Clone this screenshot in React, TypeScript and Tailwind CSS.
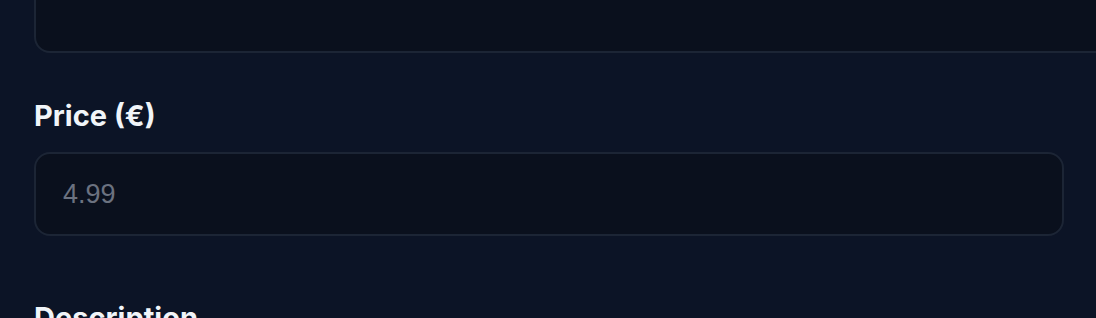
export default function App() {
  return (
    <div className="h-[318px] w-full overflow-hidden bg-[#0c1426] px-[34px] font-['Inter',sans-serif]">
      {/* field above, cut off by the top edge */}
      <div className="-mt-[30px] -mr-[120px] h-[83px] rounded-[16px] border-2 border-[#1c2535] bg-[#0a101d]" />

      <div className="mt-[43px]">
        <label className="block text-[29px] leading-[40px] font-bold text-[#f1f5f9]">Price (€)</label>
        <input
          type="text"
          placeholder="4.99"
          className="mt-[16px] block h-[84px] w-[1030px] rounded-[16px] border-2 border-[#1c2535] bg-[#0a101d] pl-[27px] font-['Liberation_Sans',Arial,sans-serif] text-[27px] text-[#e2e8f0] outline-none placeholder:text-[#6b7280]"
        />
      </div>

      <div className="mt-[62px]">
        <label className="block text-[29px] leading-[40px] font-bold text-[#f1f5f9]">Description</label>
      </div>
    </div>
  );
}
